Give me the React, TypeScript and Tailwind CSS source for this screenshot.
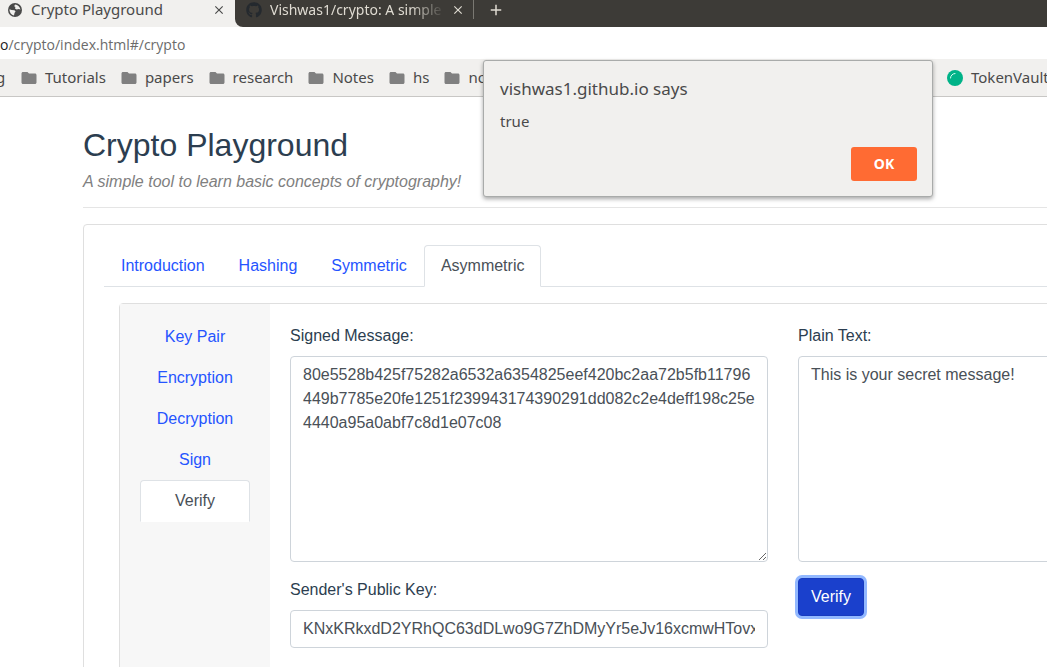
import React from 'react';
import { FaGithub } from 'react-icons/fa';
import { MdAdd, MdClose, MdFolder } from 'react-icons/md';

const signature =
  '80e5528b425f75282a6532a6354825eef420bc2aa72b5fb11796449b7785e20fe1251f239943174390291dd082c2e4deff198c25e4440a95a0abf7c8d1e07c08';

const folders = ['Tutorials', 'papers', 'research', 'Notes', 'hs', 'no'];
const tabs = ['Introduction', 'Hashing', 'Symmetric', 'Asymmetric'];
const steps = ['Key Pair', 'Encryption', 'Decryption', 'Sign', 'Verify'];

function GlobeIcon() {
  return (
    <svg viewBox="0 0 16 16" className="size-4 shrink-0" aria-hidden="true">
      <circle cx="8" cy="8" r="7" fill="#4a4a4a" />
      <path
        d="M2.5 7.2 4.6 8 7.4 8.2 8.6 9.4 7.6 10.8 7 13.4A5.6 5.6 0 0 1 2.5 7.2Z M8 2.6 7.2 4.2 8.4 5 8 6.4 9.6 7.4 12 7 13.4 7.8A5.5 5.5 0 0 0 8 2.6Z"
        fill="#f1f0ee"
      />
    </svg>
  );
}

function BrowserBar() {
  return (
    <header className="font-['Noto_Sans','Open_Sans',sans-serif] text-[15px] text-[#4a4a4a]">
      <div className="flex h-[27px] bg-[#f1f0ee]">
        <div className="flex h-[19px] w-[235px] shrink-0 items-center pr-[9px] pl-[7px]">
          <GlobeIcon />
          <span className="ml-2 flex-1 whitespace-nowrap">Crypto Playground</span>
          <button type="button" aria-label="Close Crypto Playground">
            <MdClose className="size-[14px]" />
          </button>
        </div>
        <div className="flex flex-1 items-start rounded-bl-[8px] bg-[#3d3b37] text-[#dfdbd2]">
          <div className="flex h-[19px] w-[239px] items-center border-r border-[#7a7872] pr-2 pl-[11px]">
            <FaGithub className="size-4 shrink-0 text-[#24292e]" />
            <span className="ml-2 w-[176px] overflow-hidden mask-r-from-80% text-[14px] whitespace-nowrap">
              Vishwas1/crypto: A simple
            </span>
            <button type="button" aria-label="Close Vishwas1/crypto" className="ml-[6px]">
              <MdClose className="size-[14px]" />
            </button>
          </div>
          <button type="button" aria-label="New tab" className="ml-[13px] flex h-5 items-center">
            <MdAdd className="size-[18px]" />
          </button>
        </div>
      </div>
      <div className="flex h-8 items-center bg-white pt-[2px] font-['Open_Sans','Noto_Sans',sans-serif] text-[14px] text-[#6b6b6b]">
        <span className="text-[#222]">o</span>/crypto/index.html#/crypto
      </div>
      <nav className="flex h-[38px] items-center overflow-hidden border-b border-[#c8c7c5] bg-[#f1f0ee] whitespace-nowrap">
        <a href="#blog" className="-ml-1 w-6 shrink-0">g</a>
        <div className="flex w-[927px] shrink-0 gap-[14px] overflow-hidden">
          {folders.map((name) => (
            <a key={name} href={'#' + name} className="flex items-center gap-[7px]">
              <MdFolder className="size-[18px] text-[#808080]" />
              {name}
            </a>
          ))}
        </div>
        <a href="#tokenvault" className="flex shrink-0 items-center gap-2">
          <svg viewBox="0 0 16 16" className="size-4" aria-hidden="true">
            <circle cx="8" cy="8" r="8" fill="#00b388" />
            <path d="M3.5 8A4.5 4.5 0 0 1 8 3.5" fill="none" stroke="#d9fff4" strokeLinecap="round" />
          </svg>
          TokenVault
        </a>
      </nav>
    </header>
  );
}

function AlertDialog() {
  return (
    <div
      role="alertdialog"
      aria-labelledby="alert-title"
      className="absolute top-[60px] left-[483px] flex h-[137px] w-[450px] flex-col rounded-[3px] border border-[#a9abaa] bg-[#f1f0ee] pt-4 pr-[15px] pb-[15px] pl-4 font-['Noto_Sans','Open_Sans',sans-serif] text-[#4a4a4a] shadow-[0_2px_4px_rgba(0,0,0,0.35)]"
    >
      <h2 id="alert-title" className="text-[17px] leading-6">vishwas1.github.io says</h2>
      <p className="mt-2 text-[15px] leading-6">true</p>
      <button
        type="button"
        className="mt-auto h-[34px] w-[66px] self-end rounded-[3px] bg-[#ff6b33] pb-[2px] text-[14px] font-bold text-white"
      >
        OK
      </button>
    </div>
  );
}

const fieldClass =
  'block w-full rounded-[4px] border border-[#ced4da] bg-white px-3 py-[6px] text-[#495057]';

export default function App() {
  return (
    <div className="relative min-h-screen overflow-hidden bg-white">
      <BrowserBar />
      <main className="mr-[-300px] ml-[83px] min-w-[1264px] pt-[29px] font-['Liberation_Sans',Arial,sans-serif] text-base leading-6 text-[#2c3e50]">
        <h1 className="text-[32px] leading-[38px]">Crypto Playground</h1>
        <p className="mt-[6px] text-[#808080] italic">A simple tool to learn basic concepts of cryptography!</p>
        <hr className="mt-[13px] mb-4 border-[#e5e5e5]" />
        <section className="rounded-[4px] border border-[#dfdfdf] p-5">
          <div role="tablist" className="flex border-b border-[#dee2e6]">
            {tabs.map((name) => (
              <button
                key={name}
                type="button"
                role="tab"
                aria-selected={name === 'Asymmetric'}
                className={
                  name === 'Asymmetric'
                    ? '-mb-px rounded-t-[4px] border border-[#dee2e6] border-b-white bg-white px-4 py-2 text-[#495057]'
                    : '-mb-px border border-transparent px-4 py-2 text-[#2554ff]'
                }
              >
                {name}
              </button>
            ))}
          </div>
          <div className="mx-[15px] mt-4 flex min-h-[384px] rounded-[4px] border border-[#dfdfdf]">
            <div role="tablist" aria-orientation="vertical" className="flex w-[150px] shrink-0 flex-col bg-[#f7f7f7] px-5 py-3">
              {steps.map((name) => (
                <button
                  key={name}
                  type="button"
                  role="tab"
                  aria-selected={name === 'Verify'}
                  className={
                    name === 'Verify'
                      ? '-mb-px rounded-t-[4px] border border-[#dee2e6] border-b-white bg-white py-2 text-[#495057]'
                      : '-mb-px border border-transparent py-2 text-[#2554ff]'
                  }
                >
                  {name}
                </button>
              ))}
            </div>
            <form className="grid flex-1 grid-cols-[478px_1fr] gap-x-[30px] p-5">
              <div>
                <label htmlFor="signed" className="mb-2 block">Signed Message:</label>
                <textarea id="signed" rows={8} defaultValue={signature} className={fieldClass + ' mb-4 resize-y break-all'} />
                <label htmlFor="public-key" className="mb-2 block">Sender's Public Key:</label>
                <input id="public-key" defaultValue="KNxKRkxdD2YRhQC63dDLwo9G7ZhDMyYr5eJv16xcmwHTovxQm3" className={fieldClass} />
              </div>
              <div>
                <label htmlFor="plain" className="mb-2 block">Plain Text:</label>
                <textarea id="plain" rows={8} defaultValue="This is your secret message!" className={fieldClass + ' mb-4 resize-y'} />
                <button
                  type="button"
                  className="rounded-[4px] border border-[#173bc0] bg-[#1a40cc] px-3 py-[6px] text-white shadow-[0_0_0_3px_#92b8ff]"
                >
                  Verify
                </button>
              </div>
            </form>
          </div>
        </section>
      </main>
      <AlertDialog />
    </div>
  );
}
